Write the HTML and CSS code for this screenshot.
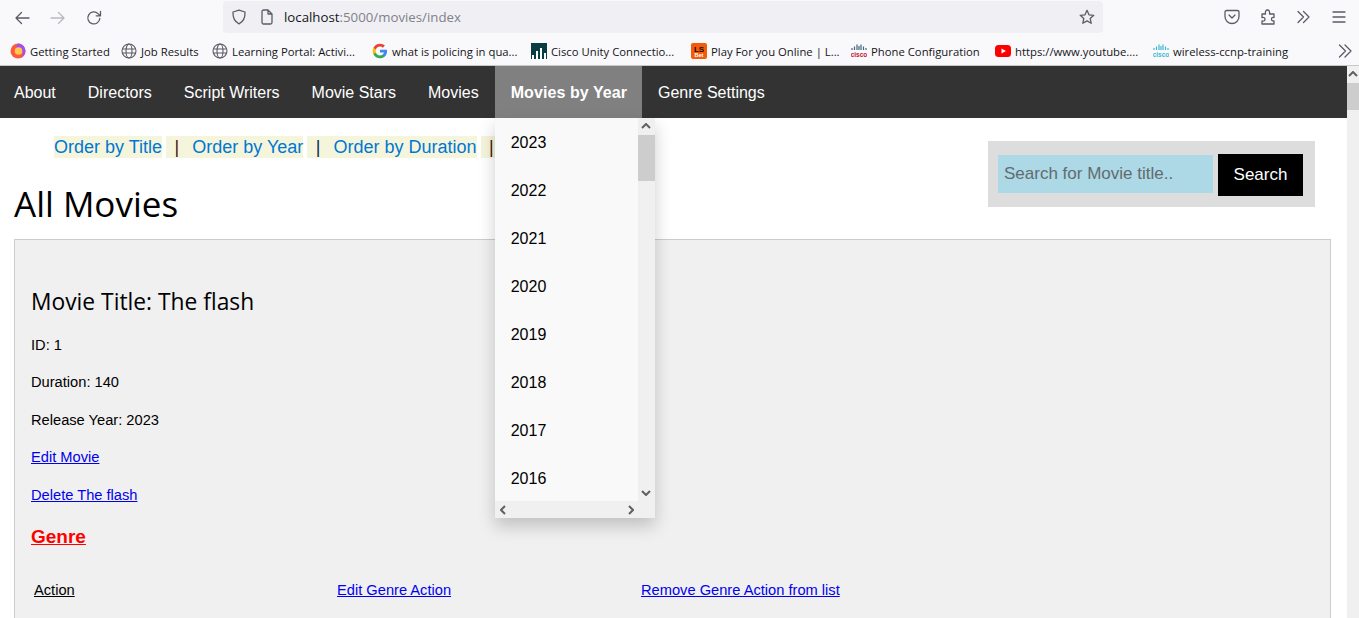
FILE: index.html
```html
<!DOCTYPE html>
<html lang="en">
<head>
<meta charset="utf-8">
<title>All Movies</title>
<link rel="stylesheet" href="styles.css">
</head>
<body>
<header class="browser">
  <div class="toolbar">
    <div class="nav-btns">
      <svg class="ic" viewBox="0 0 16 16"><path d="M15 8H2M7.500 2.500 2 8l5.500 5.500" class="st"/></svg>
      <svg class="ic dim" viewBox="0 0 16 16"><path d="M1 8h13M8.500 2.500 14 8l-5.500 5.500" class="st"/></svg>
      <svg class="ic" viewBox="0 0 16 16"><path d="M13.800 8.500A6 6 0 1 1 12 3.600L14 5.500M14.500 1.500v4.300h-4.300" class="st"/></svg>
    </div>
    <div class="urlbar">
      <svg class="ic shield" viewBox="0 0 16 16"><path d="M8 1.200 14 3c.3 5.500-1.500 9.500-6 11.800C3.500 12.500 1.700 8.500 2 3z" class="st"/></svg>
      <svg class="ic pageicon" viewBox="0 0 14 16"><path d="M2 2.500A1.500 1.500 0 0 1 3.500 1H8l4 4v8.500a1.500 1.500 0 0 1-1.500 1.500h-7A1.500 1.500 0 0 1 2 13.500zM8 1v4h4" class="st"/></svg>
      <span class="url">localhost<span class="url-dim">:5000/movies/index</span></span>
      <svg class="ic star" viewBox="0 0 16 16"><path d="m8 1.300 2 4.500 4.800.5-3.600 3.200 1 4.800L8 11.900l-4.200 2.400 1-4.800L1.200 6.300 6 5.800z" class="st"/></svg>
    </div>
    <div class="tools">
      <svg class="ic" viewBox="0 0 16 16"><path d="M2.500 1.500h11A1.500 1.500 0 0 1 15 3v4.500a7 7 0 0 1-14 0V3a1.500 1.500 0 0 1 1.500-1.500zM5 6l3 3 3-3" class="st"/></svg>
      <svg class="ic" viewBox="0 0 16 16"><path d="M2 5h3.500C5 2.500 6 1 7.500 1S10 2.500 9.500 5H14v3.500c-2-.5-2.500.5-2.500 1.700s.8 2 2.500 1.600V15H2v-3c2 .5 3-.5 3-1.800S4 8 2 8.500z" class="st"/></svg>
      <svg class="ic" viewBox="0 0 16 16"><path d="m3 2.500 5.500 5.500L3 13.500M8.500 2.500 14 8l-5.500 5.500" class="st"/></svg>
      <svg class="ic" viewBox="0 0 16 16"><path d="M2 3h12M2 8h12M2 13h12" class="st"/></svg>
    </div>
  </div>
  <div class="bookmarks">
    <span class="bm bm-1"><svg class="fav" viewBox="0 0 16 16"><circle cx="8" cy="8" r="7.500" fill="#ff5a3c"/><path d="M8 .5a7.500 7.500 0 0 1 7.500 7.500c0 3-2 6-5 7 2-1.500 3-4 2-6.500C11.500 6 8.500 5 6 5.500 6.500 3 7 1.500 8 .5z" fill="#a44df0"/><circle cx="8.500" cy="8" r="3.800" fill="#ffc94d"/></svg>Getting Started</span>
    <span class="bm bm-2"><svg class="fav" viewBox="0 0 16 16"><g class="globe"><circle cx="8" cy="8" r="7"/><ellipse cx="8" cy="8" rx="3" ry="7"/><path d="M1 6h14M1 10h14"/></g></svg>Job Results</span>
    <span class="bm bm-3"><svg class="fav" viewBox="0 0 16 16"><g class="globe"><circle cx="8" cy="8" r="7"/><ellipse cx="8" cy="8" rx="3" ry="7"/><path d="M1 6h14M1 10h14"/></g></svg>Learning Portal: Activi...</span>
    <span class="bm bm-4"><svg class="fav" viewBox="0 0 24 24"><path d="M22.560 12.250c0-.78-.07-1.530-.2-2.250H12v4.260h5.920c-.26 1.370-1.040 2.530-2.210 3.310v2.770h3.570c2.080-1.920 3.280-4.740 3.280-8.090z" fill="#4285f4"/><path d="M12 23c2.970 0 5.460-.98 7.280-2.660l-3.570-2.770c-.98.66-2.230 1.060-3.710 1.060-2.860 0-5.290-1.930-6.160-4.530H2.180v2.840C3.990 20.530 7.700 23 12 23z" fill="#34a853"/><path d="M5.840 14.090c-.22-.66-.35-1.360-.35-2.090s.13-1.430.35-2.090V7.070H2.180C1.430 8.550 1 10.220 1 12s.43 3.450 1.180 4.930l3.660-2.840z" fill="#fbbc05"/><path d="M12 5.380c1.620 0 3.060.56 4.210 1.640l3.150-3.150C17.450 2.090 14.970 1 12 1 7.700 1 3.990 3.470 2.180 7.070l3.660 2.840c.87-2.600 3.300-4.530 6.160-4.530z" fill="#ea4335"/></svg>what is policing in qua...</span>
    <span class="bm bm-5"><svg class="fav" viewBox="0 0 16 16"><rect width="16" height="16" fill="#0b3c3f"/><path d="M1 16v-4h2v4zM5 16V8h2v8zM9 16V5h2v11zM13 16v-6h2v6z" fill="#fff"/></svg>Cisco Unity Connectio...</span>
    <span class="bm bm-6"><svg class="fav" viewBox="0 0 16 16"><rect width="16" height="16" rx="2" fill="#f45a0a"/><text x="8" y="8.500" class="ls-top">LS</text><text x="8" y="14" class="ls-bot">Bet</text></svg>Play For you Online | L...</span>
    <span class="bm bm-7"><svg class="fav" viewBox="0 0 16 16"><path d="M1 5v2M3.500 3.500V7M6 1.500V7M8 3V7M10 1.500V7M12.500 3.500V7M15 5v2" class="cisco-bars"/><text x="8" y="14" class="cisco-red">cisco</text></svg>Phone Configuration</span>
    <span class="bm bm-8"><svg class="fav" viewBox="0 0 16 16"><rect y="2" width="16" height="12" rx="3.500" fill="#f00"/><path d="m6.500 5.500 4.500 2.500-4.500 2.500z" fill="#fff"/></svg>https://www.youtube....</span>
    <span class="bm bm-9"><svg class="fav" viewBox="0 0 16 16"><path d="M1 5v2M3.500 3.500V7M6 1.500V7M8 3V7M10 1.500V7M12.500 3.500V7M15 5v2" class="cisco-teal"/><text x="8" y="14" class="cisco-tealtext">cisco</text></svg>wireless-ccnp-training</span>
    <svg class="ic more" viewBox="0 0 16 16"><path d="m2.500 2 6 6-6 6M8 2l6 6-6 6" class="st"/></svg>
  </div>
</header>

<div class="viewport">
  <div class="page">
    <nav class="sitenav">
      <a class="navlink">About</a>
      <a class="navlink">Directors</a>
      <a class="navlink">Script Writers</a>
      <a class="navlink">Movie Stars</a>
      <a class="navlink">Movies</a>
      <div class="navdrop">
        <a class="navlink active">Movies by Year</a>
        <div class="dropmenu">
          <div class="drop-main">
            <ul class="years">
              <li>2023</li><li>2022</li><li>2021</li><li>2020</li><li>2019</li><li>2018</li><li>2017</li><li>2016</li>
            </ul>
            <div class="vbar">
              <svg class="arrow" viewBox="0 0 10 6"><path d="M1 5l4-4 4 4" class="ar"/></svg>
              <div class="vthumb"></div>
              <svg class="arrow arrow-end" viewBox="0 0 10 6"><path d="M1 1l4 4 4-4" class="ar"/></svg>
            </div>
          </div>
          <div class="hbar">
            <svg class="harrow" viewBox="0 0 6 10"><path d="M5 1 1 5l4 4" class="ar"/></svg>
            <svg class="harrow" viewBox="0 0 6 10"><path d="m1 1 4 4-4 4" class="ar"/></svg>
          </div>
        </div>
      </div>
      <a class="navlink">Genre Settings</a>
    </nav>

    <main class="content">
      <div class="top">
        <div class="top-left">
          <div class="orders">
            <span class="hl"><a class="order">Order by Title</a></span>
            <span class="hl"><b class="sep sep-red">|</b><a class="order">Order by Year</a></span>
            <span class="hl"><b class="sep sep-navy">|</b><a class="order">Order by Duration</a></span>
            <span class="hl"><b class="sep sep-red">|</b></span>
          </div>
          <h1 class="title">All Movies</h1>
        </div>
        <form class="search">
          <input class="search-input" type="text" placeholder="Search for Movie title..">
          <button class="search-btn" type="button">Search</button>
        </form>
      </div>

      <section class="card">
        <h2 class="movie">Movie Title: The flash</h2>
        <p class="line">ID: 1</p>
        <p class="line">Duration: 140</p>
        <p class="line">Release Year: 2023</p>
        <p class="line"><a class="link">Edit Movie</a></p>
        <p class="line"><a class="link">Delete The flash</a></p>
        <h3 class="genre">Genre</h3>
        <div class="genre-row">
          <span class="genre-name">Action</span>
          <a class="link">Edit Genre Action</a>
          <a class="link">Remove Genre Action from list</a>
        </div>
      </section>
    </main>
  </div>
  <div class="pagebar">
    <svg class="arrow" viewBox="0 0 10 6"><path d="M1 5l4-4 4 4" class="ar"/></svg>
    <div class="pagethumb"></div>
  </div>
</div>
</body>
</html>
```
FILE: styles.css
```css
* { box-sizing: border-box; }
html, body { margin: 0; height: 618px; overflow: hidden; background: #fff; }
body { display: flex; flex-direction: column; font-family: "Liberation Sans", Arial, sans-serif; color: #000; }

.browser { height: 66px; flex: none; background: #f9f9fb; border-bottom: 1px solid #c8c8ca; font-family: "Open Sans", "Noto Sans", sans-serif; color: #15141a; }
.toolbar { height: 36px; display: flex; align-items: center; padding: 1px 0 3px; }
.ic { width: 16px; height: 16px; flex: none; }
.st { fill: none; stroke: #5b5b66; stroke-width: 1.300; stroke-linecap: round; stroke-linejoin: round; }
.dim .st { stroke: #b9b9c0; }
.nav-btns { width: 223px; display: flex; gap: 20px; padding: 1px 0 0 14px; }
.urlbar { width: 880px; height: 32px; background: #f0f0f4; border-radius: 4px; display: flex; align-items: center; padding-left: 8px; }
.shield { margin-right: 13px; }
.pageicon { margin-right: 10px; width: 14px; }
.url { font-size: 13.250px; flex: 1; }
.url-dim { color: #80808a; }
.star { margin-right: 8px; }
.tools { display: flex; gap: 19.500px; padding-left: 121px; }
.bookmarks { height: 29px; display: flex; align-items: center; padding: 1px 0 0 10px; font-size: 11.300px; white-space: nowrap; }
.bm { display: flex; align-items: center; gap: 4px; }
.fav { width: 16px; height: 16px; flex: none; }
.bm-1 { width: 111px; }
.bm-2 { width: 91px; }
.bm-3 { width: 160px; }
.bm-4 { width: 159px; }
.bm-5 { width: 160px; }
.bm-6 { width: 160px; }
.bm-7 { width: 144px; }
.bm-8 { width: 158px; }
.bm-9 { width: 180px; }
.more { margin-left: 4px; }
.globe { fill: none; stroke: #5b5b66; stroke-width: 1.100; }
.ls-top, .ls-bot, .cisco-red, .cisco-tealtext { font-family: "Liberation Sans", Arial, sans-serif; font-weight: 700; text-anchor: middle; }
.ls-top { font-size: 8px; fill: #1b0d00; }
.ls-bot { font-size: 5.500px; fill: #fff; }
.cisco-red { font-size: 6.500px; fill: #c8102e; }
.cisco-tealtext { font-size: 6.500px; fill: #3fb8cf; }
.cisco-bars { stroke: #3f6484; stroke-width: 1.200; fill: none; }
.cisco-teal { stroke: #3fb8cf; stroke-width: 1.200; fill: none; }

.viewport { flex: 1; display: flex; min-height: 0; }
.page { flex: 1; min-width: 0; }
.pagebar { width: 12px; flex: none; background: #f0f0f0; display: flex; flex-direction: column; align-items: center; }
.pagebar .arrow { margin: 5px 0 6px; }
.pagethumb { width: 12px; height: 27px; background: #cdcdcd; }
.arrow { width: 10px; height: 6px; flex: none; }
.harrow { width: 6px; height: 10px; flex: none; }
.ar { fill: none; stroke: #606060; stroke-width: 2; }

.sitenav { height: 52px; background: #333; display: flex; margin-left: -2px; }
.navlink { display: block; padding: 17px 16px 15px; height: 52px; font-size: 16px; line-height: 20px; color: #fff; }
.navdrop { position: relative; }
.active { background: #808080; font-weight: 700; letter-spacing: .07px; padding-right: 15px; }
.dropmenu { position: absolute; top: 52px; left: 0; width: 160px; height: 400px; z-index: 2; background: #f9f9f9; box-shadow: 0 8px 16px rgba(0,0,0,.2); display: flex; flex-direction: column; }
.drop-main { flex: 1; display: flex; min-height: 0; }
.years { list-style: none; margin: 0; padding: 0; flex: 1; }
.years li { height: 48px; padding: 15px 16px 13px; font-size: 16px; line-height: 20px; color: #000; }
.vbar { width: 17px; background: #f0f0f0; display: flex; flex-direction: column; align-items: center; }
.vbar .arrow { margin: 5px 0 6px; }
.vthumb { width: 17px; height: 46px; background: #cdcdcd; }
.vbar .arrow-end { margin: auto 0 5px; }
.hbar { height: 17px; background: #f0f0f0; display: flex; justify-content: space-between; align-items: center; padding: 0 21px 0 5px; }

.content { padding: 0 16px 0 14px; }
.top { display: flex; justify-content: space-between; height: 121px; }
.top-left { padding-top: 18px; }
.orders { display: flex; gap: 4px; padding-left: 40px; height: 22px; font-size: 18px; line-height: 22px; }
.hl { background: #f5f5dc; white-space: nowrap; }
.order { color: #0077d4; }
.sep { font-weight: 400; margin: 0 13px 0 8.500px; }
.sep-red { color: #4a1505; }
.sep-navy { color: #0a2a50; }
.title { margin: 22px 0 0; font-family: "Open Sans", "Noto Sans", sans-serif; font-weight: 400; font-size: 35px; line-height: 48px; }
.search { width: 327px; height: 66px; margin: 23px 16px 0 0; background: #ddd; display: flex; align-items: flex-start; padding: 13px 12px 0 10px; gap: 5px; }
.search-input { width: 215px; height: 38px; margin-top: 1px; border: 0; padding: 0 6px; background: #add8e6; font: 17px "Liberation Sans", Arial, sans-serif; color: #000; outline: 0; }
.search-input::placeholder { color: #606c70; opacity: 1; }
.search-btn { width: 85px; height: 42px; border: 0; padding: 0; background: #000; color: #fff; font: 17px "Liberation Sans", Arial, sans-serif; }

.card { background: #f0f0f0; border: 1px solid #ccc; padding: 46px 16px 0; height: 400px; }
.movie { margin: 0 0 18.500px; font-family: "Open Sans", "Noto Sans", sans-serif; font-weight: 400; font-size: 22.800px; line-height: 32px; }
.line { margin: 0 0 21.600px; font-size: 14.670px; line-height: 16px; }
.link { color: #00e; text-decoration: underline; }
.genre { margin: 0 0 33.500px; padding-top: 2px; font-size: 19px; line-height: 22px; font-weight: 700; color: #f00; text-decoration: underline; }
.genre-row { display: grid; grid-template-columns: 303px 304px auto; justify-content: start; padding-left: 3px; font-size: 14.670px; line-height: 16px; }
.genre-name { text-decoration: underline; }
```
